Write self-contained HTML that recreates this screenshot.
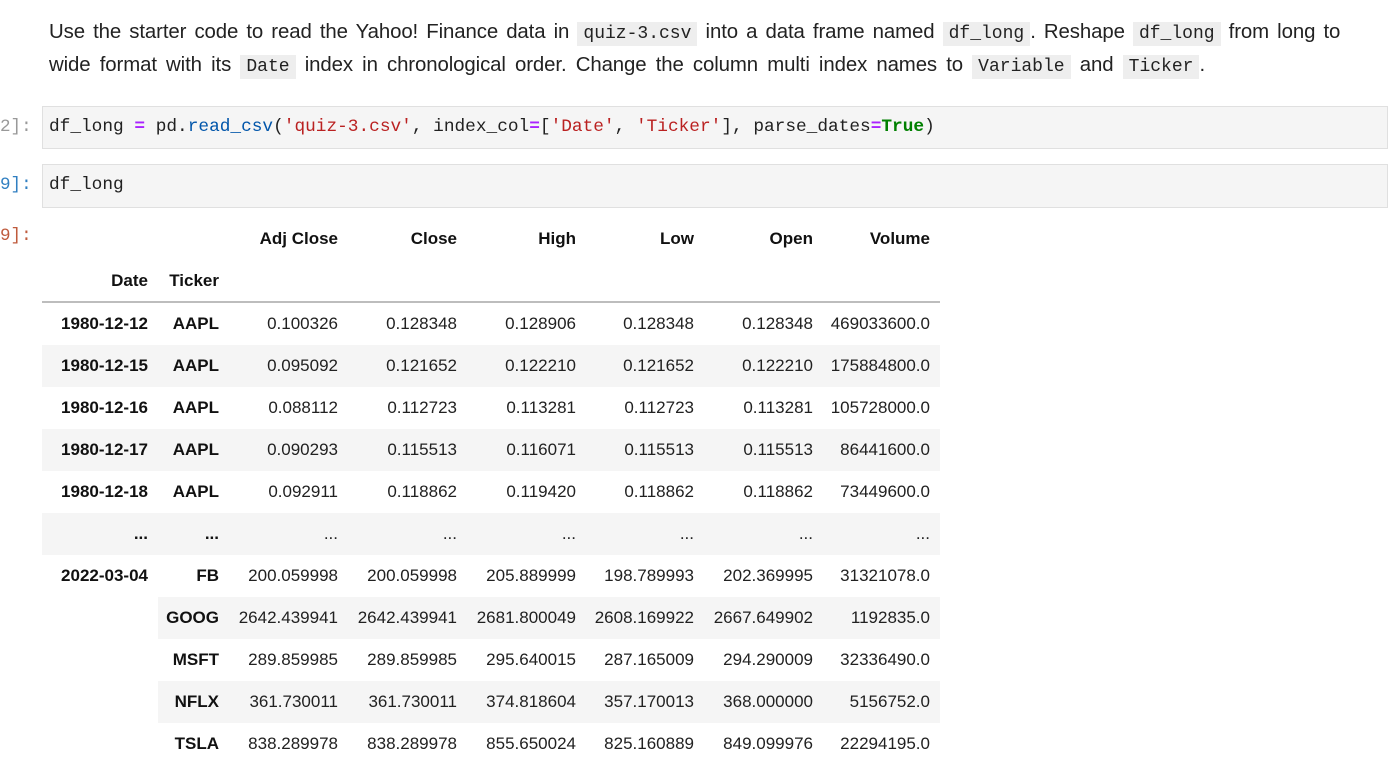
<!DOCTYPE html>
<html><head><meta charset="utf-8"><style>
body{margin:0;width:1393px;height:780px;overflow:hidden;background:#fff;font-family:"Liberation Sans",sans-serif;color:#212121;position:relative}
.p{position:absolute;left:49px;font-size:20.4px;white-space:nowrap;line-height:33px;color:#222;letter-spacing:-0.1px;word-spacing:2.8px}
.p code{font-family:"Liberation Mono",monospace;font-size:18px;background:#eee;padding:2px 6px;color:#222;letter-spacing:0;word-spacing:0}
.prompt{position:absolute;left:0;font-family:"Liberation Mono",monospace;font-size:17.6px}
.cell{position:absolute;left:42px;width:1346px;background:#f5f5f5;border:1px solid #e0e0e0;font-family:"Liberation Mono",monospace;font-size:17.8px;line-height:40px;padding-left:6px;box-sizing:border-box;white-space:pre;color:#212121}
.s{color:#ba2121}.k{color:#008000;font-weight:bold}.o{color:#aa22ff;font-weight:bold}.f{color:#0055aa}
table{position:absolute;left:42px;top:218px;border-collapse:collapse;table-layout:fixed;font-size:17px}
td,th{text-align:right;padding:0 10px 0 0;height:42px;white-space:nowrap}
th{font-weight:bold;color:#111}
tr.g td,tr.g th{background:#f5f5f5}
thead tr:last-child th{border-bottom:2px solid #bdbdbd;height:41px}
</style></head><body>
<div class="p" style="top:16px;word-spacing:2.55px">Use the starter code to read the Yahoo! Finance data in <code>quiz-3.csv</code> into a data frame named <code>df_long</code>. Reshape <code>df_long</code> from long to</div>
<div class="p" style="top:49px;word-spacing:3.6px">wide format with its <code>Date</code> index in chronological order. Change the column multi index names to <code>Variable</code> and <code>Ticker</code>.</div>
<div class="prompt" style="top:117px;color:#999">2]:</div>
<div class="cell" style="top:106px;height:43px">df_long <span class="o">=</span> pd.<span class="f">read_csv</span>(<span class="s">'quiz-3.csv'</span>, index_col<span class="o">=</span>[<span class="s">'Date'</span>, <span class="s">'Ticker'</span>], parse_dates<span class="o">=</span><span class="k">True</span>)</div>
<div class="prompt" style="top:175px;color:#307fc1">9]:</div>
<div class="cell" style="top:164px;height:44px">df_long</div>
<div class="prompt" style="top:226px;color:#bf5b3d">9]:</div>
<table>
<colgroup><col style="width:116px"><col style="width:71px"><col style="width:119px"><col style="width:119px"><col style="width:119px"><col style="width:118px"><col style="width:119px"><col style="width:117px"></colgroup>
<thead>
<tr><th></th><th></th><th>Adj Close</th><th>Close</th><th>High</th><th>Low</th><th>Open</th><th>Volume</th></tr>
<tr><th>Date</th><th>Ticker</th><th></th><th></th><th></th><th></th><th></th><th></th></tr>
</thead>
<tbody>
<tr><th>1980-12-12</th><th>AAPL</th><td>0.100326</td><td>0.128348</td><td>0.128906</td><td>0.128348</td><td>0.128348</td><td>469033600.0</td></tr>
<tr class="g"><th>1980-12-15</th><th>AAPL</th><td>0.095092</td><td>0.121652</td><td>0.122210</td><td>0.121652</td><td>0.122210</td><td>175884800.0</td></tr>
<tr><th>1980-12-16</th><th>AAPL</th><td>0.088112</td><td>0.112723</td><td>0.113281</td><td>0.112723</td><td>0.113281</td><td>105728000.0</td></tr>
<tr class="g"><th>1980-12-17</th><th>AAPL</th><td>0.090293</td><td>0.115513</td><td>0.116071</td><td>0.115513</td><td>0.115513</td><td>86441600.0</td></tr>
<tr><th>1980-12-18</th><th>AAPL</th><td>0.092911</td><td>0.118862</td><td>0.119420</td><td>0.118862</td><td>0.118862</td><td>73449600.0</td></tr>
<tr class="g"><th>...</th><th>...</th><td>...</td><td>...</td><td>...</td><td>...</td><td>...</td><td>...</td></tr>
<tr><th rowspan="5" style="vertical-align:top;padding-top:11px;background:#fff">2022-03-04</th><th>FB</th><td>200.059998</td><td>200.059998</td><td>205.889999</td><td>198.789993</td><td>202.369995</td><td>31321078.0</td></tr>
<tr class="g"><th>GOOG</th><td>2642.439941</td><td>2642.439941</td><td>2681.800049</td><td>2608.169922</td><td>2667.649902</td><td>1192835.0</td></tr>
<tr><th>MSFT</th><td>289.859985</td><td>289.859985</td><td>295.640015</td><td>287.165009</td><td>294.290009</td><td>32336490.0</td></tr>
<tr class="g"><th>NFLX</th><td>361.730011</td><td>361.730011</td><td>374.818604</td><td>357.170013</td><td>368.000000</td><td>5156752.0</td></tr>
<tr><th>TSLA</th><td>838.289978</td><td>838.289978</td><td>855.650024</td><td>825.160889</td><td>849.099976</td><td>22294195.0</td></tr>
</tbody></table>
</body></html>
